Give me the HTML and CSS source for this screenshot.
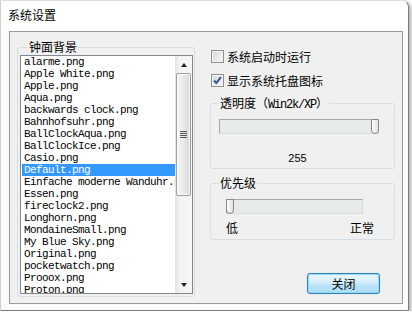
FILE: index.html
```html
<!DOCTYPE html>
<html>
<head>
  <title>系统设置</title>
  <meta http-equiv="Content-Type" content="text/html;charset=utf-8" />
  <link rel="stylesheet" href="styles.css">
</head>
<body>
  <div class="window">
    <div class="titlebar">系统设置</div>
    <div class="panel">
      <fieldset class="group skins">
        <legend>钟面背景</legend>
        <div class="listbox">
          <ul class="items">
            <li>alarme.png</li>
            <li>Apple White.png</li>
            <li>Apple.png</li>
            <li>Aqua.png</li>
            <li>backwards clock.png</li>
            <li>Bahnhofsuhr.png</li>
            <li>BallClockAqua.png</li>
            <li>BallClockIce.png</li>
            <li>Casio.png</li>
            <li class="selected">Default.png</li>
            <li>Einfache moderne Wanduhr.png</li>
            <li>Essen.png</li>
            <li>fireclock2.png</li>
            <li>Longhorn.png</li>
            <li>MondaineSmall.png</li>
            <li>My Blue Sky.png</li>
            <li>Original.png</li>
            <li>pocketwatch.png</li>
            <li>Prooox.png</li>
            <li>Proton.png</li>
          </ul>
          <div class="scrollbar">
            <div class="sb-btn"><span class="arrow up"></span></div>
            <div class="sb-track">
              <div class="sb-thumb"><span class="grip"></span></div>
            </div>
            <div class="sb-btn"><span class="arrow down"></span></div>
          </div>
        </div>
      </fieldset>

      <div class="options">
        <label class="check"><span class="box"></span>系统启动时运行</label>
        <label class="check second">
          <span class="box">
            <svg width="11" height="11" viewBox="0 0 11 11"><path d="M2 5.5 L4.3 8 L9 2.2" fill="none" stroke="#3d5488" stroke-width="2"/></svg>
          </span>显示系统托盘图标</label>

        <fieldset class="group opacity">
          <legend>透明度（<span class="mono">Win2k/XP</span>）</legend>
          <div class="slider wide"><span class="thumb"></span></div>
          <div class="value">255</div>
        </fieldset>

        <fieldset class="group priority">
          <legend>优先级</legend>
          <div class="slider narrow"><span class="thumb"></span></div>
          <div class="ends"><span>低</span><span>正常</span></div>
        </fieldset>

        <div class="actions"><button class="btn">关闭</button></div>
      </div>
    </div>
  </div>
</body>
</html>
```

FILE: styles.css
```css
* { box-sizing: border-box; }
body {
  margin: 0;
  background: #fff;
  font-family: "Noto Sans CJK SC", sans-serif;
  font-size: 12px;
  color: #000;
}
.window {
  width: 409px;
  height: 311px;
  background: #fbfbfb;
  border: 1px solid #7c7c7c;
  border-left-color: #cfcfcf;
  border-top-color: #e0e0e0;
  border-radius: 0 7px 2px 0;
  box-shadow: 2px 2px 4px rgba(0,0,0,.35);
}
.titlebar {
  height: 30px;
  line-height: 28px;
  padding-left: 7px;
  background: #fff;
  border-radius: 0 7px 0 0;
}
.panel {
  display: flex;
  gap: 15px;
  margin-left: 8px;
  width: 394px;
  height: 273px;
  padding: 8px 7px 0 7px;
  background: #f0f0f0;
  border: 1px solid #9a9a9a;
}

/* group boxes */
.group {
  margin: 0;
  padding: 0;
  min-width: 0;
  border: 1px solid #d5dfe5;
  border-radius: 3px;
}
.group legend {
  margin-left: 8px;
  padding: 0 1px;
  height: 14px;
  line-height: 14px;
}
.mono {
  font-family: "Liberation Mono", monospace;
  letter-spacing: -1.2px;
}
.skins {
  width: 178px;
  height: 257px;
  padding: 0 1px 0 2px;
}

/* list box */
.listbox {
  display: flex;
  width: 173px;
  height: 239px;
  margin-top: 1px;
  background: #fff;
  border: 1px solid #828790;
}
.items {
  flex: 1;
  min-width: 0;
  margin: 0;
  padding: 0;
  list-style: none;
  overflow: hidden;
}
.items li {
  height: 12px;
  line-height: 12px;
  margin-left: 1px;
  padding-left: 2px;
  white-space: nowrap;
  overflow: hidden;
  font-family: "Liberation Mono", monospace;
  font-size: 11px;
  letter-spacing: -0.6px;
}
.items li.selected {
  background: #3399ff;
  color: #fff;
}
.scrollbar {
  width: 17px;
  display: flex;
  flex-direction: column;
  background: linear-gradient(to right, #e2e2e2, #f2f2f2 25%, #f6f6f6);
}
.sb-btn {
  height: 17px;
  display: flex;
  align-items: center;
  justify-content: center;
}
.arrow {
  width: 0;
  height: 0;
  border-left: 3.5px solid transparent;
  border-right: 3.5px solid transparent;
}
.arrow.up { border-bottom: 4px solid #222; }
.arrow.down { border-top: 4px solid #222; }
.sb-track { flex: 1; }
.sb-thumb {
  height: 123px;
  margin: 0 1px;
  border: 1px solid #9e9e9e;
  border-radius: 2px;
  background: linear-gradient(to right, #f6f6f6, #e9e9e9 50%, #d9d9d9);
  box-shadow: inset 0 0 0 1px rgba(255,255,255,.7);
  display: flex;
  align-items: center;
  justify-content: center;
}
.grip {
  width: 7px;
  height: 7px;
  background: repeating-linear-gradient(#555 0 1px, transparent 1px 2px);
}

/* right column */
.options {
  width: 185px;
  display: flex;
  flex-direction: column;
}
.check {
  display: flex;
  align-items: center;
  gap: 3px;
  height: 13px;
  margin: 10px 0 0 1px;
  line-height: 13px;
}
.check.second { margin-top: 11px; }
.box {
  width: 13px;
  height: 13px;
  flex: none;
  display: flex;
  align-items: center;
  justify-content: center;
  border: 1px solid #8e8f8f;
  background: linear-gradient(135deg, #d4d6d9, #f7f7f7);
  box-shadow: inset 0 0 0 1px #f4f4f4;
}
.opacity {
  width: 185px;
  height: 73px;
  margin-top: 9px;
}
.priority {
  width: 185px;
  height: 64px;
  margin-top: 7px;
}
.slider {
  display: flex;
  height: 15px;
  margin-top: 9px;
  background: #e7eaea;
  border: 1px solid;
  border-color: #a7a7a7 #dadada #dadada #a7a7a7;
}
.slider.wide {
  width: 160px;
  margin-left: 8px;
  justify-content: flex-end;
}
.slider.narrow {
  width: 137px;
  margin-left: 15px;
  justify-content: flex-start;
}
.thumb {
  width: 8px;
  height: 15px;
  margin: -1px;
  border: 1px solid #888;
  border-radius: 1px 1px 4px 4px;
  background: linear-gradient(to right, #fdfdfd, #e2e2e2);
}
.value {
  width: 160px;
  margin: 17px 0 0 8px;
  padding-right: 3px;
  text-align: center;
  line-height: 14px;
  font-family: "Liberation Sans", sans-serif;
  font-size: 11px;
}
.ends {
  display: flex;
  justify-content: space-between;
  width: 148px;
  margin: 7px 0 0 15px;
  line-height: 14px;
}
.actions {
  display: flex;
  justify-content: flex-end;
  margin: 33px 15px 0 0;
}
.btn {
  width: 73px;
  height: 21px;
  padding: 0;
  font-family: "Noto Sans CJK SC", sans-serif;
  font-size: 12px;
  line-height: 19px;
  color: #000;
  border: 1px solid #3c7fb1;
  border-radius: 3px;
  background: linear-gradient(#e8f6fd, #d6effc 48%, #bfe6fb 52%, #a9dcf6);
  box-shadow: inset 0 0 0 1px #8fdcfb, 0 0 1px #6ccaf7;
}
```
